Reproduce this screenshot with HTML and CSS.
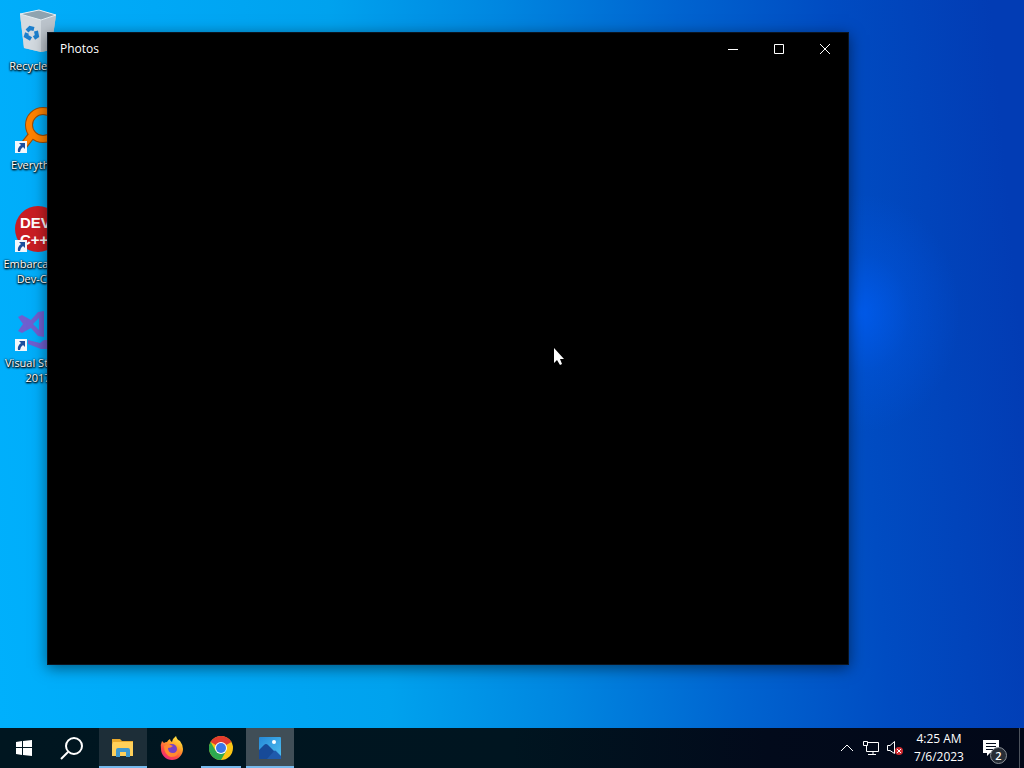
FILE: index.html
```html
<!DOCTYPE html>
<html lang="en">
<head>
    <meta charset="UTF-8">
    <meta name="viewport" content="width=device-width, initial-scale=1.0">
    <title>Desktop</title>
    <link rel="stylesheet" href="styles.css">
</head>
<body>
    <main class="desktop">
        <div class="shortcuts">
            <a class="shortcut" href="#">
                <svg class="shortcut-icon" viewBox="0 0 48 48">
                    <path d="M6 6 L25 2 L42 7 L37 42 L27 44 L10 40 Z" fill="#c3c9cf"/>
                    <path d="M6 6 L27 12 L27 44 L10 40 Z" fill="#d3dae0"/>
                    <path d="M27 12 L42 7 L37 42 L27 44 Z" fill="#bcc4cc"/>
                    <path d="M6 6 L25 2 L42 7 L27 12 Z" fill="#8fa3b0" stroke="#e3edf3" stroke-width="1"/>
                    <g fill="none" stroke="#1b7fcd" stroke-width="4">
                        <path d="M13 23 L16 20 L20 21"/>
                        <path d="M22 23 L23 28 L20 30"/>
                        <path d="M17 31 L12 28 L13 25"/>
                    </g>
                </svg>
                <span>Recycle Bin</span>
            </a>
            <a class="shortcut" href="#">
                <svg class="shortcut-icon" viewBox="0 0 48 48">
                    <g fill="none" stroke-linecap="round">
                        <path d="M17 29 L10 38" stroke="#9a4c08" stroke-width="8"/>
                        <circle cx="29" cy="18" r="14" stroke="#9a4c08" stroke-width="8"/>
                        <path d="M18 28 L10 38" stroke="#ff8200" stroke-width="6"/>
                        <circle cx="29" cy="18" r="14" stroke="#ff8200" stroke-width="6"/>
                    </g>
                    <use href="#arrow"/>
                </svg>
                <span>Everything</span>
            </a>
            <a class="shortcut" href="#">
                <svg class="shortcut-icon" viewBox="0 0 48 48">
                    <circle cx="24" cy="23" r="23" fill="#c91d23"/>
                    <text class="dev-text" x="6" y="22">DEV</text>
                    <text class="dev-text" x="6" y="39">C++</text>
                    <use href="#arrow"/>
                </svg>
                <span>Embarcadero Dev-C++</span>
            </a>
            <a class="shortcut" href="#">
                <svg class="shortcut-icon" viewBox="0 0 48 48">
                    <path d="M4 12 L8 10 L17 15 L24 7 L30 6 V32 L24 31 L17 23 L8 28 L4 26 L9 19 Z M19 19 L25 25 V13 Z" fill="#6f5fcf" fill-rule="evenodd"/>
                    <path d="M14 35 L26 38 L30 35 H36 L33 44 L27 44 L14 39 Z" fill="#6f5fcf"/>
                    <use href="#arrow"/>
                </svg>
                <span>Visual Studio 2017</span>
            </a>
        </div>

        <section class="window">
            <header class="title-bar">
                <h1>Photos</h1>
                <button aria-label="Minimize">
                    <svg viewBox="0 0 10 10"><path d="M0 5.5 H10"/></svg>
                </button>
                <button aria-label="Maximize">
                    <svg viewBox="0 0 10 10"><path d="M.5 .5 H9.5 V9.5 H.5 Z"/></svg>
                </button>
                <button aria-label="Close">
                    <svg viewBox="0 0 10 10"><path d="M0 0 L10 10 M10 0 L0 10"/></svg>
                </button>
            </header>
        </section>

        <svg class="cursor" viewBox="0 0 12 18">
            <path d="M0 0 V15 L3 12 L6 17 L8 16 L6 11 H10 Z" fill="#fff"/>
        </svg>
    </main>

    <footer class="taskbar">
        <div class="system">
            <button class="task" aria-label="Start">
                <svg viewBox="0 0 24 24" fill="#fff">
                    <path d="M4 6 L10 5 V11 H4 Z M11 5 L20 4 V11 H11 Z M4 12 H10 V19 L4 18 Z M11 12 H20 V20 L11 19 Z"/>
                </svg>
            </button>
            <button class="task" aria-label="Search">
                <svg viewBox="0 0 24 24" fill="none" stroke="#fff" stroke-width="2">
                    <circle cx="14" cy="10" r="8"/>
                    <path d="M8 16 L1 23"/>
                </svg>
            </button>
        </div>
        <div class="apps">
            <button class="task open hovered" aria-label="File Explorer">
                <svg viewBox="0 0 24 24">
                    <path d="M1 3 H9 L11 5 H22 V20 H1 Z" fill="#e9a92c"/>
                    <path d="M2 6 H22 V20 H1 V9 Z" fill="#ffd05a"/>
                    <path d="M5 21 V14 Q5 12 7 12 H17 Q19 12 19 14 V21 H15 V16 H9 V21 Z" fill="#3f98cf"/>
                </svg>
            </button>
            <button class="task" aria-label="Firefox">
                <svg viewBox="0 0 24 24">
                    <defs>
                        <linearGradient id="fire" x1="0.8" y1="0" x2="0.2" y2="1">
                            <stop offset="0" stop-color="#fff04a"/>
                            <stop offset="0.35" stop-color="#ffa928"/>
                            <stop offset="0.7" stop-color="#ff4a43"/>
                            <stop offset="1" stop-color="#e8238a"/>
                        </linearGradient>
                    </defs>
                    <path d="M2 5 L4 7 Q5 6 7 6 Q8 4 10 3 Q10 5 12 6 Q13 2 16 0 Q17 4 20 5 Q23 9 23 13 A11 11 0 0 1 1 13 Q0 9 2 5 Z" fill="url(#fire)"/>
                    <circle cx="12" cy="13" r="5" fill="#7542c6"/>
                    <path d="M4 10 Q8 7 13 10 Q11 12 8 12 Q8 17 13 17 Q17 17 18 12 Q20 21 11 21 Q4 19 4 10 Z" fill="#ff8a30"/>
                </svg>
            </button>
            <button class="task open inset" aria-label="Chrome">
                <svg viewBox="0 0 24 24">
                    <circle cx="12" cy="12" r="12" fill="#fbc515"/>
                    <path d="M12 12 L1.6 6 A12 12 0 0 1 22.4 6 Z" fill="#e33b2e"/>
                    <path d="M1.6 6 A12 12 0 0 0 12 24 L17.2 15 L12 12 L6.8 15 Z" fill="#2da94f"/>
                    <circle cx="12" cy="12" r="6" fill="#fff"/>
                    <circle cx="12" cy="12" r="5" fill="#3b78e7"/>
                </svg>
            </button>
            <button class="task open active" aria-label="Photos">
                <svg viewBox="0 0 24 24">
                    <defs>
                        <linearGradient id="sky" x1="0" y1="0" x2="1" y2="1">
                            <stop offset="0" stop-color="#2589d8"/>
                            <stop offset="1" stop-color="#4fc0f0"/>
                        </linearGradient>
                    </defs>
                    <rect x="1" y="1" width="22" height="22" rx="1" fill="url(#sky)"/>
                    <path d="M1 14 L6 9 Q8 7 10 9 L23 22 V23 H1 Z" fill="#174a98"/>
                    <path d="M9 23 L16 15 Q17 14 18 15 L23 20 V23 Z" fill="#1f5aac"/>
                    <circle cx="16" cy="6" r="2" fill="#fff"/>
                </svg>
            </button>
        </div>

        <div class="tray">
            <button class="tray-button" aria-label="Show hidden icons">
                <svg viewBox="0 0 16 16"><path d="M2 11 L8 5 L14 11"/></svg>
            </button>
            <button class="tray-button" aria-label="Network">
                <svg viewBox="0 0 16 16"><path d="M5 2.500 H15.500 V11.500 H3.500 V6 M10 11.500 V14 M5 14.500 H13 M.5 1.500 H4.500 V5.500 H.5 Z"/></svg>
            </button>
            <button class="tray-button" aria-label="Volume muted">
                <svg viewBox="0 0 16 16">
                    <path d="M.5 5.500 H3 L7.500 1.500 V13.500 L3 10.500 H.5 Z"/>
                    <circle cx="12" cy="11" r="4" fill="#d12d32" stroke="none"/>
                    <path d="M10 9 L14 13 M14 9 L10 13"/>
                </svg>
            </button>
            <button class="clock">
                <time>4:25 AM</time>
                <time>7/6/2023</time>
            </button>
            <button class="notifications" aria-label="Notifications">
                <svg viewBox="0 0 16 16">
                    <path d="M0 0 H16 V13 H7 L4 16 V13 H0 Z" fill="#fff"/>
                    <path d="M3 3.500 H13 M3 6.500 H13 M3 9.500 H10" stroke="#020b1b"/>
                </svg>
                <span class="badge">2</span>
            </button>
            <button class="show-desktop" aria-label="Show desktop"></button>
        </div>
    </footer>

    <svg class="symbols">
        <symbol id="arrow" viewBox="0 0 48 48">
            <rect x="1" y="34" width="12" height="12" fill="#f4f7fb"/>
            <path d="M5 36 H11 V42 L9 40 Q6 42 6 45 H4 Q3 41 7 38 Z" fill="#1c4f9e"/>
        </symbol>
    </svg>
</body>
</html>
```
FILE: styles.css
```css
* {
    box-sizing: border-box;
}
body {
    margin: 0;
    height: 100vh;
    display: flex;
    flex-direction: column;
    overflow: hidden;
    font-family: "Open Sans", "Noto Sans", sans-serif;
    font-size: 12px;
    color: #fff;
}
button {
    display: flex;
    align-items: center;
    justify-content: center;
    padding: 0;
    border: none;
    background: none;
    color: inherit;
    font: inherit;
}
.desktop {
    flex: 1;
    position: relative;
    background:
        radial-gradient(ellipse 100px 120px at 84% 43%, rgba(0, 98, 255, 0.65), rgba(0, 98, 255, 0.2) 50%, rgba(0, 98, 255, 0)),
        linear-gradient(85deg, #00b0fc 0%, #00a8f6 20%, #00a2ee 36%, #0086e0 52%, #0064d0 68%, #004cc2 82%, #023cb4 97%);
}
.shortcuts {
    width: 76px;
    padding-top: 8px;
}
.shortcut {
    display: flex;
    flex-direction: column;
    align-items: center;
    height: 99px;
    color: #fff;
    font-size: 11px;
    line-height: 15px;
    text-align: center;
    text-decoration: none;
    text-shadow: 0 1px 2px #000, 1px 1px 2px #000, 0 0 2px #000;
}
.shortcut-icon {
    width: 48px;
    height: 48px;
    margin-bottom: 2px;
}
.dev-text {
    fill: #fff;
    font-family: "Liberation Sans", sans-serif;
    font-size: 15px;
    font-weight: bold;
    text-shadow: none;
}
.window {
    position: absolute;
    top: 32px;
    right: 175px;
    bottom: 63px;
    left: 47px;
    background: #000;
    border: 1px solid #0b1420;
    box-shadow: 0 3px 14px rgba(0, 0, 0, 0.5);
}
.title-bar {
    display: flex;
    height: 32px;
    padding-left: 12px;
}
.title-bar h1 {
    flex: 1;
    margin: 0;
    font-size: 12px;
    font-weight: normal;
    line-height: 32px;
}
.title-bar button {
    width: 46px;
}
.title-bar svg {
    width: 10px;
    height: 10px;
    fill: none;
    stroke: #fff;
}
.cursor {
    position: absolute;
    top: 348px;
    left: 554px;
    width: 12px;
    height: 18px;
}
.taskbar {
    display: flex;
    height: 40px;
    background: linear-gradient(to right, #001620, #001520 50%, #020a1b 75%, #020818);
}
.system {
    display: flex;
    margin-right: 3px;
}
.apps {
    display: flex;
    gap: 1px;
}
.task {
    width: 48px;
    border: solid transparent;
    border-width: 2px 0;
}
.task svg {
    width: 24px;
    height: 24px;
}
.open {
    border-bottom-color: #76b9ed;
}
.inset {
    width: 40px;
    margin: 0 4px;
}
.hovered {
    background: #1d2e38;
    border-top-color: #1d2e38;
}
.active {
    background: #404e57;
    border-top-color: #404e57;
}
.tray {
    display: flex;
    margin-left: auto;
}
.tray-button {
    width: 24px;
}
.tray-button svg {
    width: 16px;
    height: 16px;
    fill: none;
    stroke: #fff;
}
.clock {
    flex-direction: column;
    width: 64px;
    line-height: 18px;
}
.notifications {
    position: relative;
    width: 48px;
    padding-right: 8px;
}
.notifications svg {
    width: 16px;
    height: 16px;
}
.badge {
    position: absolute;
    top: 19px;
    left: 19px;
    width: 17px;
    height: 17px;
    border: 1px solid #8b9097;
    border-radius: 50%;
    background: #272d36;
    font-size: 11px;
    font-weight: 600;
    line-height: 15px;
    text-align: center;
}
.show-desktop {
    width: 5px;
    border-left: 1px solid #4d535d;
}
.symbols {
    display: none;
}
```
